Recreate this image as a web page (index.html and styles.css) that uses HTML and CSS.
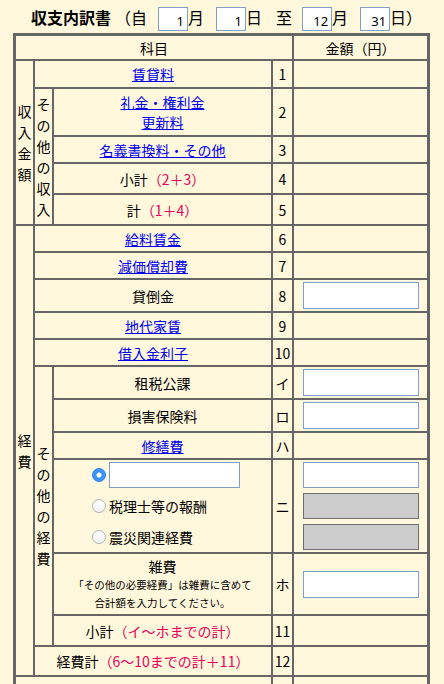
FILE: index.html
```html
<!DOCTYPE html>
<html lang="ja">
<head>
<meta charset="utf-8">
<title>収支内訳書</title>
<link rel="stylesheet" href="styles.css">
</head>
<body>
<div class="page">
  <div class="title-row">
    <span class="title-main">収支内訳書</span>
    <span class="open">（自</span>
    <span class="date-group first"><input class="date" value="1"><span>月</span></span>
    <span class="date-group"><input class="date" value="1"><span>日</span></span>
    <span class="sep">至</span>
    <span class="date-group"><input class="date" value="12"><span>月</span></span>
    <span class="date-group"><input class="date" value="31"><span>日）</span></span>
  </div>

  <div class="sheet">
    <div class="cell span4">科目</div>
    <div class="cell">金額（円）</div>

    <div class="cell vert rows5"><span class="vtext">収入金額</span></div>
    <div class="cell span2"><a href="#">賃貸料</a></div>
    <div class="cell">1</div>
    <div class="cell amount"></div>

    <div class="cell vert rows4"><span class="vtext">その他の収入</span></div>
    <div class="cell"><a href="#">礼金・権利金<br>更新料</a></div>
    <div class="cell">2</div>
    <div class="cell amount"></div>

    <div class="cell"><a href="#">名義書換料・その他</a></div>
    <div class="cell">3</div>
    <div class="cell amount"></div>

    <div class="cell">小計<span class="red">（2＋3）</span></div>
    <div class="cell">4</div>
    <div class="cell amount"></div>

    <div class="cell">計<span class="red">（1＋4）</span></div>
    <div class="cell">5</div>
    <div class="cell amount"></div>

    <div class="cell vert rows12"><span class="vtext">経費</span></div>
    <div class="cell span2"><a href="#">給料賃金</a></div>
    <div class="cell">6</div>
    <div class="cell amount"></div>

    <div class="cell span2"><a href="#">減価償却費</a></div>
    <div class="cell">7</div>
    <div class="cell amount"></div>

    <div class="cell span2">貸倒金</div>
    <div class="cell">8</div>
    <div class="cell amount"><input class="amount-input" type="text"></div>

    <div class="cell span2"><a href="#">地代家賃</a></div>
    <div class="cell">9</div>
    <div class="cell amount"></div>

    <div class="cell span2"><a href="#">借入金利子</a></div>
    <div class="cell">10</div>
    <div class="cell amount"></div>

    <div class="cell vert rows6"><span class="vtext">その他の経費</span></div>
    <div class="cell">租税公課</div>
    <div class="cell">イ</div>
    <div class="cell amount"><input class="amount-input" type="text"></div>

    <div class="cell">損害保険料</div>
    <div class="cell">ロ</div>
    <div class="cell amount"><input class="amount-input" type="text"></div>

    <div class="cell"><a href="#">修繕費</a></div>
    <div class="cell">ハ</div>
    <div class="cell amount"></div>

    <div class="cell choices">
      <label class="choice"><input class="radio" type="radio" name="kind" checked><input class="free-input" type="text"></label>
      <label class="choice"><input class="radio" type="radio" name="kind"><span>税理士等の報酬</span></label>
      <label class="choice"><input class="radio" type="radio" name="kind"><span>震災関連経費</span></label>
    </div>
    <div class="cell">ニ</div>
    <div class="cell amount stack">
      <input class="amount-input small" type="text">
      <input class="amount-input small disabled" type="text" disabled>
      <input class="amount-input small disabled" type="text" disabled>
    </div>

    <div class="cell misc">
      <span class="misc-title">雑費</span>
      <span class="note">「その他の必要経費」は雑費に含めて</span>
      <span class="note">合計額を入力してください。</span>
    </div>
    <div class="cell">ホ</div>
    <div class="cell amount"><input class="amount-input" type="text"></div>

    <div class="cell">小計<span class="red">（イ～ホまでの計）</span></div>
    <div class="cell">11</div>
    <div class="cell amount"></div>

    <div class="cell span2">経費計<span class="red">（6～10までの計＋11）</span></div>
    <div class="cell">12</div>
    <div class="cell amount"></div>

    <div class="cell span3"></div>
    <div class="cell"></div>
    <div class="cell amount"></div>
  </div>
</div>
</body>
</html>
```

FILE: styles.css
```css
html, body {
  margin: 0;
  padding: 0;
  background: #fff8dc;
}

body {
  font-family: "Noto Sans CJK JP", "Noto Sans", sans-serif;
  color: #000;
}

.page {
  padding-top: 7px;
}

/* ---------- title ---------- */
.title-row {
  display: flex;
  align-items: flex-start;
  height: 24px;
  padding-left: 31px;
  font-size: 16px;
  line-height: 20px;
}

.title-main {
  font-weight: bold;
}

.open {
  margin-left: 4px;
}

.date-group {
  display: flex;
  align-items: flex-start;
  margin-left: 12px;
}

.date-group.first {
  margin-left: 11px;
}

.sep {
  margin-left: 14px;
}

.sep + .date-group {
  margin-left: 10px;
}

.date {
  width: 30px;
  height: 24px;
  box-sizing: border-box;
  margin: 0;
  padding: 3px 3px 0 2px;
  border: 1px solid #7f9fc4;
  border-radius: 0;
  background: #fff;
  text-align: right;
  font: 13px "Noto Sans", sans-serif;
  color: #000;
  outline: none;
}

/* ---------- sheet ---------- */
.sheet {
  display: grid;
  width: 417px;
  box-sizing: border-box;
  margin: 2px 0 0 13px;
  border: 3px solid #666;
  background: #666;
  gap: 2px;
  grid-template-columns: 17px 17px 217px 19px 133px;
  grid-template-rows:
    23px 26px 46px 25px 29px 29px
    25px 25px 31px 25px 25px
    31px 31px 25px 92px 60px 29px 28px 28px;
  font-size: 14px;
  line-height: 20px;
}

.cell {
  background: #fff8dc;
  display: flex;
  align-items: center;
  justify-content: center;
  text-align: center;
  white-space: nowrap;
}

.span2 { grid-column: span 2; }
.span3 { grid-column: span 3; }
.span4 { grid-column: span 4; }
.rows4 { grid-row: span 4; }
.rows5 { grid-row: span 5; }
.rows6 { grid-row: span 6; }
.rows12 { grid-row: span 12; }

.vert {
  line-height: 21px;
}

.vtext {
  display: block;
  width: 14px;
  white-space: normal;
  word-break: break-all;
}

a {
  color: #0000ee;
  text-decoration: underline;
}

.red {
  color: #e8005a;
}

/* ---------- amount inputs ---------- */
.amount {
  justify-content: flex-start;
  padding-left: 9px;
}

.amount-input {
  width: 116px;
  height: 27px;
  box-sizing: border-box;
  margin: 0;
  padding: 2px 4px;
  border: 1px solid #7f9fc4;
  border-radius: 0;
  background: #fff;
  font: 13px "Noto Sans", sans-serif;
  outline: none;
}

.amount.stack {
  flex-direction: column;
  align-items: flex-start;
  justify-content: center;
  gap: 5px;
}

.amount-input.small {
  height: 26px;
}

.amount-input.disabled {
  background: #cccccc;
  border-color: #6e6e6e;
}

/* ---------- choices ---------- */
.choices {
  flex-direction: column;
  align-items: flex-start;
  justify-content: center;
  gap: 5px;
  padding-left: 38px;
}

.choice {
  display: flex;
  align-items: center;
  height: 26px;
  gap: 3px;
}

.radio {
  appearance: none;
  -webkit-appearance: none;
  width: 14px;
  height: 14px;
  margin: 0;
  box-sizing: border-box;
  border-radius: 50%;
  border: 1px solid #b4b4b4;
  background: linear-gradient(#ffffff, #f1f1f1);
}

.radio:checked {
  border-color: #2d84ec;
  background: radial-gradient(circle, #ffffff 0 2.3px, #3a93f6 2.8px);
}

.free-input {
  width: 131px;
  height: 26px;
  box-sizing: border-box;
  margin: 0;
  padding: 2px 4px;
  border: 1px solid #7f9fc4;
  border-radius: 0;
  background: #fff;
  font: 13px "Noto Sans", sans-serif;
  outline: none;
}

/* ---------- misc row ---------- */
.misc {
  flex-direction: column;
}

.misc-title {
  line-height: 20px;
}

.note {
  font-size: 10.5px;
  line-height: 18px;
}
```
